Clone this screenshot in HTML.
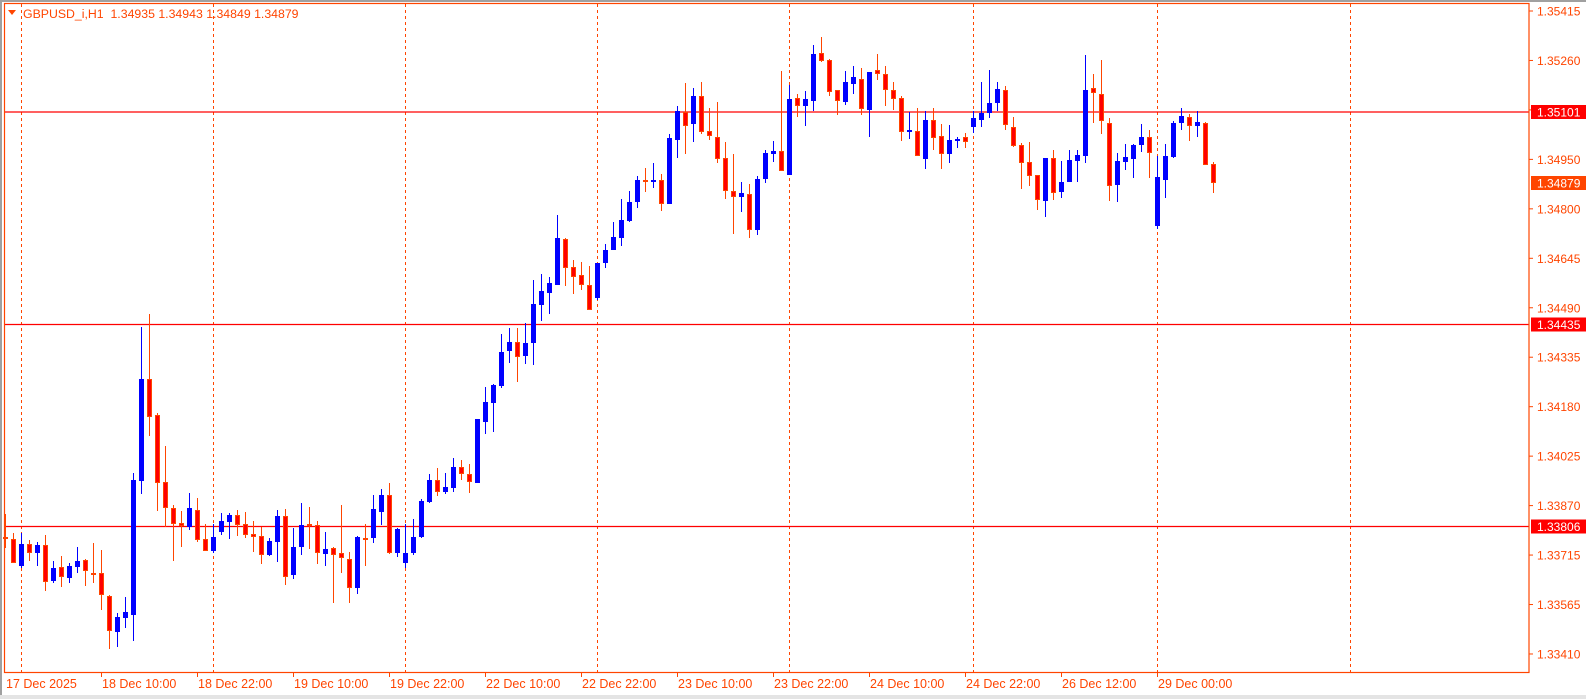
<!DOCTYPE html>
<html><head><meta charset="utf-8"><style>
html,body{margin:0;padding:0;background:#fff;width:1586px;height:699px;overflow:hidden}
svg{display:block}
text{font-family:"Liberation Sans",sans-serif;font-size:12px}
</style></head><body>
<svg id="s" width="1586" height="699" xmlns="http://www.w3.org/2000/svg">
<rect x="0" y="0" width="1586" height="699" fill="#fff"/>
<rect x="0" y="0" width="1586" height="2" fill="#a0a0a0"/>
<rect x="0" y="0" width="2" height="699" fill="#a0a0a0"/>
<rect x="0" y="695" width="1586" height="4" fill="#e4e4e4"/>
<g id="grid" stroke="#ff4500" stroke-width="1" stroke-dasharray="3,3" fill="none">
<line x1="21.5" y1="4" x2="21.5" y2="672"/><line x1="213.5" y1="4" x2="213.5" y2="672"/>
<line x1="405.5" y1="4" x2="405.5" y2="672"/><line x1="597.5" y1="4" x2="597.5" y2="672"/>
<line x1="789.5" y1="4" x2="789.5" y2="672"/><line x1="973.5" y1="4" x2="973.5" y2="672"/>
<line x1="1157.5" y1="4" x2="1157.5" y2="672"/><line x1="1350.5" y1="4" x2="1350.5" y2="672"/>
</g>
<g stroke="#ff0000" stroke-width="1.3">
<line x1="4" y1="112" x2="1529" y2="112"/>
<line x1="4" y1="324.5" x2="1529" y2="324.5"/>
<line x1="4" y1="526.5" x2="1529" y2="526.5"/>
</g>
<g id="c"></g>
<rect x="4.5" y="3.5" width="1524.5" height="669" fill="none" stroke="#ff4500" stroke-width="1.2"/>
<polygon points="8,10 16,10 12,15" fill="#ff4500"/>
<text x="23" y="18" fill="#ff4500" style="font-size:12.3px">GBPUSD_i,H1 &#160;1.34935 1.34943 1.34849 1.34879</text>
<g id="ax" fill="#ff4500"></g>
</svg>
<script>
var d=[
[5.5,'r',537,539,514,548],[13.5,'r',539,563,533,563],[21.5,'b',544,566,533,568],[29.5,'r',544,553,540,561],[37.5,'b',545,553,542,566],[45.5,'r',545,582,535,591],[53.5,'b',568,581,561,583],[61.5,'r',567,577,556,587],[69.5,'b',566,578,563,583],[77.5,'b',561,567,547,573],[85.5,'r',560,571,559,586],[93.5,'r',573,574,543,583],[101.5,'r',573,595,550,610],[109.5,'r',596,631,595,649],[117.5,'b',617,632,613,647],[125.5,'b',612,618,597,628],[133.5,'b',480,615,473,641],[141.5,'b',379,481,327,494],[149.5,'r',379,417,314,436],[157.5,'r',415,483,413,511],[165.5,'r',482,508,446,527],[173.5,'r',508,524,505,561],[181.5,'r',523,526,511,547],[189.5,'b',508,527,493,530],[197.5,'r',510,540,498,542],[205.5,'r',539,551,524,551],[213.5,'b',537,551,524,553],[221.5,'b',521,532,513,535],[229.5,'b',515,522,513,539],[237.5,'r',515,525,510,536],[245.5,'r',524,535,512,538],[253.5,'r',534,537,521,552],[261.5,'r',536,555,527,564],[269.5,'b',541,555,538,556],[277.5,'b',516,542,510,562],[285.5,'r',516,577,509,585],[293.5,'b',547,575,528,579],[301.5,'b',525,547,503,555],[309.5,'r',524,526,507,549],[317.5,'r',525,553,521,564],[325.5,'b',549,554,532,566],[333.5,'r',548,555,547,603],[341.5,'r',553,558,505,573],[349.5,'r',559,588,552,603],[357.5,'b',537,588,536,594],[365.5,'r',538,540,524,566],[373.5,'b',509,538,495,543],[381.5,'b',495,512,489,525],[389.5,'r',495,553,483,554],[397.5,'b',529,553,528,557],[405.5,'b',553,563,524,568],[413.5,'b',537,553,519,555],[421.5,'b',501,537,499,538],[429.5,'b',480,502,474,503],[437.5,'r',480,492,468,496],[445.5,'b',487,492,473,494],[453.5,'b',467,488,458,492],[461.5,'r',467,474,460,480],[469.5,'r',474,482,464,493],[477.5,'b',419,483,419,483],[485.5,'b',402,422,387,434],[493.5,'b',385,403,384,432],[501.5,'b',352,386,334,388],[509.5,'b',342,351,328,363],[517.5,'r',342,357,328,382],[525.5,'b',343,356,323,364],[533.5,'b',304,343,280,365],[541.5,'b',291,305,274,321],[549.5,'b',283,293,277,314],[557.5,'b',238,285,215,285],[565.5,'r',239,268,238,286],[573.5,'r',267,277,260,294],[581.5,'r',275,285,262,290],[589.5,'r',285,310,266,310],[597.5,'b',263,298,263,300],[605.5,'b',250,263,244,268],[613.5,'b',237,250,222,250],[621.5,'b',220,238,199,246],[629.5,'b',202,221,191,222],[637.5,'b',180,202,176,208],[645.5,'r',180,182,168,192],[653.5,'b',180,182,163,188],[661.5,'r',180,204,174,211],[669.5,'b',138,204,134,204],[677.5,'b',111,140,106,158],[685.5,'r',112,126,83,154],[693.5,'b',96,124,88,142],[701.5,'r',96,132,82,134],[709.5,'r',131,136,108,140],[717.5,'r',137,159,102,163],[725.5,'r',158,191,142,199],[733.5,'r',191,197,154,234],[741.5,'b',193,197,182,212],[749.5,'r',194,230,184,238],[757.5,'b',179,230,176,235],[765.5,'b',153,179,150,183],[773.5,'b',151,154,141,162],[781.5,'r',151,171,71,171],[789.5,'b',99,175,85,175],[797.5,'r',98,106,94,117],[805.5,'b',99,106,91,126],[813.5,'b',54,101,45,111],[821.5,'r',53,61,37,62],[829.5,'r',60,92,59,96],[837.5,'r',90,101,90,115],[845.5,'b',82,102,71,105],[853.5,'b',77,84,66,94],[861.5,'r',79,109,68,115],[869.5,'b',72,110,72,137],[877.5,'r',70,74,54,80],[885.5,'r',74,90,66,106],[893.5,'r',90,99,82,110],[901.5,'r',98,132,96,141],[909.5,'b',130,132,112,139],[917.5,'r',131,156,108,156],[925.5,'b',120,159,111,169],[933.5,'r',120,138,108,150],[941.5,'r',136,154,124,169],[949.5,'b',140,154,125,163],[957.5,'b',139,141,137,148],[965.5,'r',137,142,133,148],[973.5,'b',118,127,111,133],[981.5,'b',113,120,82,127],[989.5,'b',103,113,70,118],[997.5,'b',89,103,82,111],[1005.5,'r',90,125,86,130],[1013.5,'r',127,146,117,147],[1021.5,'r',145,163,143,189],[1029.5,'r',162,176,142,186],[1037.5,'r',175,200,175,210],[1045.5,'b',158,201,158,217],[1053.5,'r',158,193,150,200],[1061.5,'b',182,192,161,198],[1069.5,'b',160,182,150,182],[1077.5,'b',155,161,150,182],[1085.5,'b',90,156,55,163],[1093.5,'r',88,93,74,123],[1101.5,'r',94,121,60,134],[1109.5,'r',123,186,118,201],[1117.5,'b',161,185,153,202],[1125.5,'b',157,162,144,170],[1133.5,'b',145,159,144,178],[1141.5,'b',137,145,124,152],[1149.5,'r',137,153,130,178],[1157.5,'b',177,226,156,229],[1165.5,'b',156,180,144,198],[1173.5,'b',123,157,121,158],[1181.5,'b',116,123,108,130],[1189.5,'r',117,126,114,141],[1197.5,'b',122,126,111,137],[1205.5,'r',123,165,122,165],[1213.5,'r',164,183,162,193]];
var h='';
d.forEach(function(k){var x=k[0],t=k[2],b=k[3],hi=k[4],lo=k[5];
 if(b-t<2)b=t+2;
 if(k[1]=='b'){h+='<line x1="'+x+'" y1="'+hi+'" x2="'+x+'" y2="'+lo+'" stroke="#0000ff"/>';
  h+='<rect x="'+(x-2.5)+'" y="'+t+'" width="5" height="'+(b-t)+'" fill="#0000ff"/>';}
 else{h+='<line x1="'+x+'" y1="'+hi+'" x2="'+x+'" y2="'+lo+'" stroke="#ff4500"/>';
  h+='<rect x="'+(x-2)+'" y="'+(t+0.5)+'" width="4" height="'+(b-t-1)+'" fill="#ff0000" stroke="#ff4500" stroke-width="1"/>';}
});
document.getElementById('c').innerHTML=h;
var a='';
var labs=['1.35415','1.35260',null,'1.34950','1.34800','1.34645','1.34490','1.34335','1.34180','1.34025','1.33870','1.33715','1.33565','1.33410'];
labs.forEach(function(l,i){var y=11+i*49.46;
 a+='<rect x="1529" y="'+(y-0.5)+'" width="4" height="1"/>';
 if(l)a+='<text x="1537" y="'+(y+4.5)+'">'+l+'</text>';});
[['1.35101',112,'#ff0000'],['1.34879',183,'#ff4500'],['1.34435',324.5,'#ff0000'],['1.33806',526.5,'#ff0000']].forEach(function(b){
 a+='<rect x="1531" y="'+(b[1]-7)+'" width="55" height="14" fill="'+b[2]+'"/><text x="1537" y="'+(b[1]+4.5)+'" fill="#fff">'+b[0]+'</text>';});
var tl=[['17 Dec 2025',5,0],['18 Dec 10:00',101,1],['18 Dec 22:00',197,1],['19 Dec 10:00',293,1],['19 Dec 22:00',389,1],['22 Dec 10:00',485,1],['22 Dec 22:00',581,1],['23 Dec 10:00',677,1],['23 Dec 22:00',773,1],['24 Dec 10:00',869,1],['24 Dec 22:00',965,1],['26 Dec 12:00',1061,1],['29 Dec 00:00',1157,1]];
tl.forEach(function(t){ if(t[2])a+='<rect x="'+t[1]+'" y="672" width="1" height="5"/>';
 a+='<text x="'+(t[1]+1)+'" y="688" style="font-size:12.5px">'+t[0]+'</text>';});
document.getElementById('ax').innerHTML=a;
</script>
</body></html>
